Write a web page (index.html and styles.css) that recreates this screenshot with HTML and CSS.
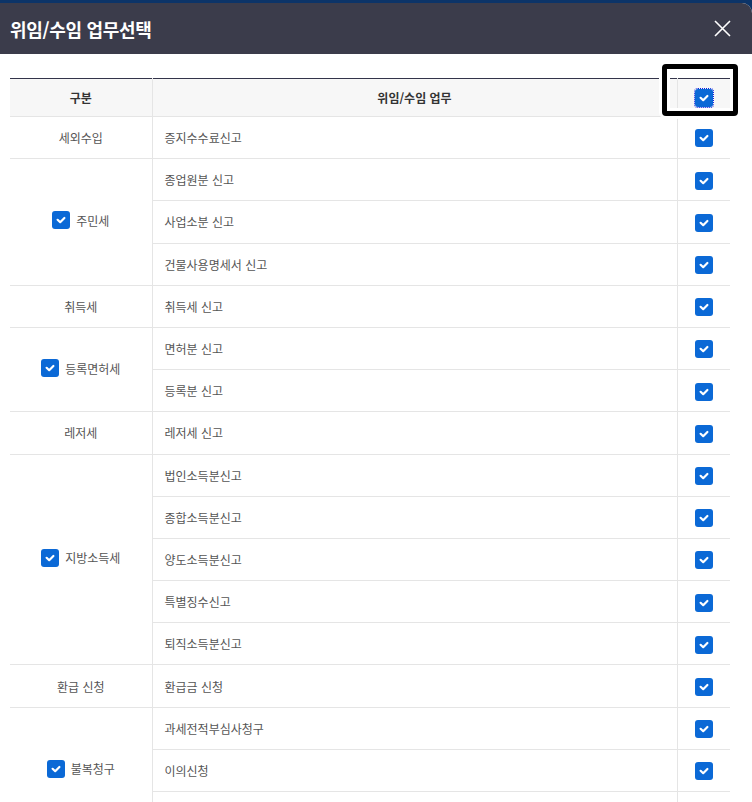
FILE: index.html
```html
<!DOCTYPE html>
<html lang="ko">
  <head>
    <meta charset="UTF-8" />
    <meta name="viewport" content="width=device-width, initial-scale=1.0" />
    <title>위임/수임 업무선택</title>
    <link rel="stylesheet" href="styles.css">
  </head>
  <body>
    <div class="modal">
      <div class="modal-header">
        <h2>위임/수임 업무선택</h2>
        <button class="btn-close" aria-label="닫기">
          <svg width="17" height="17" viewBox="0 0 17 17">
            <path d="M1 1L16 16M16 1L1 16" stroke="#fff" stroke-width="1.6" fill="none" />
          </svg>
        </button>
      </div>

      <div class="modal-body">
        <table class="task-table">
          <colgroup>
            <col class="col-group" />
            <col class="col-task" />
            <col class="col-check" />
          </colgroup>
          <thead>
            <tr>
              <th>구분</th>
              <th>위임/수임 업무</th>
              <th><span class="chk focus"></span></th>
            </tr>
          </thead>
          <tbody>
            <tr>
              <td class="group">세외수입</td>
              <td class="task">증지수수료신고</td>
              <td class="check"><span class="chk"></span></td>
            </tr>

            <tr>
              <td class="group" rowspan="3"><span class="group-label"><span class="chk"></span>주민세</span></td>
              <td class="task">종업원분 신고</td>
              <td class="check"><span class="chk"></span></td>
            </tr>
            <tr>
              <td class="task">사업소분 신고</td>
              <td class="check"><span class="chk"></span></td>
            </tr>
            <tr>
              <td class="task">건물사용명세서 신고</td>
              <td class="check"><span class="chk"></span></td>
            </tr>

            <tr>
              <td class="group">취득세</td>
              <td class="task">취득세 신고</td>
              <td class="check"><span class="chk"></span></td>
            </tr>

            <tr>
              <td class="group" rowspan="2"><span class="group-label"><span class="chk"></span>등록면허세</span></td>
              <td class="task">면허분 신고</td>
              <td class="check"><span class="chk"></span></td>
            </tr>
            <tr>
              <td class="task">등록분 신고</td>
              <td class="check"><span class="chk"></span></td>
            </tr>

            <tr>
              <td class="group">레저세</td>
              <td class="task">레저세 신고</td>
              <td class="check"><span class="chk"></span></td>
            </tr>

            <tr>
              <td class="group" rowspan="5"><span class="group-label"><span class="chk"></span>지방소득세</span></td>
              <td class="task">법인소득분신고</td>
              <td class="check"><span class="chk"></span></td>
            </tr>
            <tr>
              <td class="task">종합소득분신고</td>
              <td class="check"><span class="chk"></span></td>
            </tr>
            <tr>
              <td class="task">양도소득분신고</td>
              <td class="check"><span class="chk"></span></td>
            </tr>
            <tr>
              <td class="task">특별징수신고</td>
              <td class="check"><span class="chk"></span></td>
            </tr>
            <tr>
              <td class="task">퇴직소득분신고</td>
              <td class="check"><span class="chk"></span></td>
            </tr>

            <tr>
              <td class="group">환급 신청</td>
              <td class="task">환급금 신청</td>
              <td class="check"><span class="chk"></span></td>
            </tr>

            <tr>
              <td class="group" rowspan="3"><span class="group-label"><span class="chk"></span>불복청구</span></td>
              <td class="task">과세전적부심사청구</td>
              <td class="check"><span class="chk"></span></td>
            </tr>
            <tr>
              <td class="task">이의신청</td>
              <td class="check"><span class="chk"></span></td>
            </tr>
            <tr>
              <td class="task">심사청구</td>
              <td class="check"><span class="chk"></span></td>
            </tr>
          </tbody>
        </table>

        <!-- highlight box around the select-all checkbox -->
        <div class="highlight"></div>
      </div>
    </div>
  </body>
</html>
```

FILE: styles.css
```css
* {
  margin: 0;
  padding: 0;
  box-sizing: border-box;
}

body {
  font-family: "Noto Sans CJK KR", "Noto Sans", sans-serif;
  background-color: #0c3468;
  color: #555;
  overflow: hidden;
  height: 802px;
}

.modal {
  margin-top: 3px;
  background: #fff;
  border-top-right-radius: 10px;
  min-height: 799px;
}

.modal-header {
  height: 51px;
  background-color: #3b3c4b;
  border-top-right-radius: 10px;
  display: flex;
  align-items: center;
  justify-content: space-between;
  padding: 0 14px 0 10px;
}

.modal-header h2 {
  color: #fff;
  font-size: 18px;
  font-weight: 700;
  letter-spacing: -0.3px;
}

.btn-close {
  background: none;
  border: none;
  width: 32px;
  height: 32px;
  display: flex;
  align-items: center;
  justify-content: center;
  cursor: pointer;
}

.modal-body {
  position: relative;
  padding: 24px 22px 0 10px;
}

.task-table {
  width: 720px;
  border-collapse: collapse;
  table-layout: fixed;
  border-top: 1px solid #33344a;
  font-size: 12px;
}

.col-group {
  width: 142px;
}

.col-check {
  width: 53px;
}

.task-table th {
  height: 38px;
  background: #f7f7f7;
  color: #333;
  font-weight: 700;
  text-align: center;
  border-bottom: 1px solid #e5e5e5;
}

.task-table td {
  height: 42.2px;
  border-bottom: 1px solid #e5e5e5;
  color: #555;
}

.task-table th + th,
.task-table td.task,
.task-table td.check {
  border-left: 1px solid #e5e5e5;
}

.task-table td.group {
  text-align: center;
}

.task-table td.task {
  padding-left: 12px;
}

.task-table td.check,
.task-table th:last-child {
  text-align: center;
}

.group-label {
  display: inline-flex;
  align-items: center;
  gap: 6px;
}

.chk {
  display: inline-block;
  width: 18px;
  height: 18px;
  border-radius: 3px;
  background: #0b69d6 url("data:image/svg+xml;utf8,<svg xmlns='http://www.w3.org/2000/svg' width='18' height='18'><path d='M5.6 8.8L8.2 11.2L12.4 7' stroke='white' stroke-width='2.2' fill='none' stroke-linecap='round' stroke-linejoin='round'/></svg>") no-repeat center;
  vertical-align: middle;
}

.chk.focus {
  outline: 1px dotted #1020e0;
  outline-offset: 0;
}

.highlight {
  position: absolute;
  left: 662px;
  top: 10px;
  width: 76px;
  height: 52px;
  border: 5px solid #000;
  border-radius: 4px;
  box-shadow: 0 0 0 3px #fff, inset 0 0 0 3px #fff;
}
```
